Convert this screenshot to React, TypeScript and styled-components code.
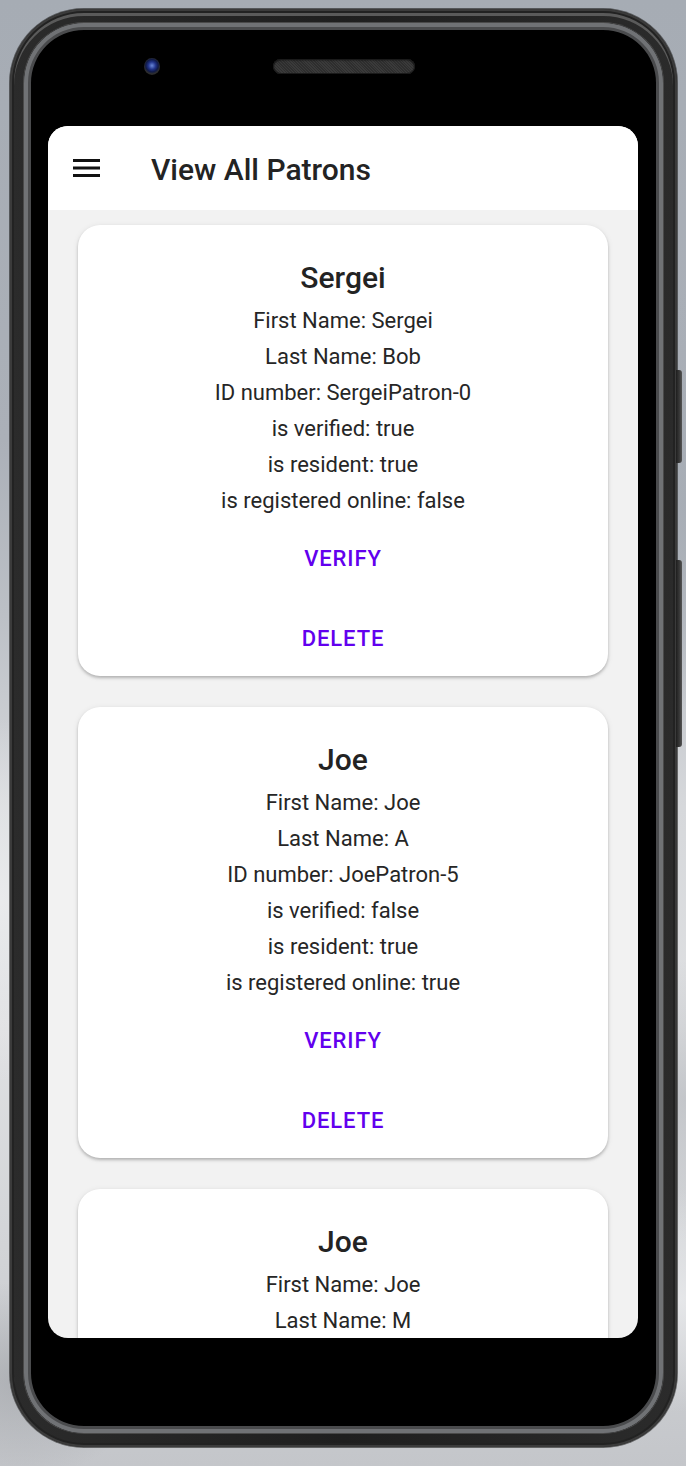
import React from "react";
import styled, { createGlobalStyle } from "styled-components";

const Global = createGlobalStyle`
  html, body { margin: 0; padding: 0; }
  body {
    width: 686px;
    height: 1466px;
    overflow: hidden;
    font-family: Roboto, "Noto Sans", Arial, sans-serif;
    background: #c9ccd0;
  }
`;

const Page = styled.div`
  width: 686px;
  height: 1466px;
  box-sizing: border-box;
  padding: 9px 9px 19px 10px;
  display: flex;
  background:
    radial-gradient(ellipse 180px 140px at 20px 1380px, rgba(150,153,158,0.55), transparent 70%),
    radial-gradient(ellipse 220px 160px at 680px 1300px, rgba(235,236,238,0.8), transparent 70%),
    radial-gradient(ellipse 140px 260px at 0px 900px, rgba(235,236,238,0.9), transparent 70%),
    radial-gradient(ellipse 160px 200px at 686px 1100px, rgba(180,183,188,0.6), transparent 70%),
    radial-gradient(ellipse 120px 300px at 686px 500px, rgba(166,172,180,0.9), transparent 70%),
    linear-gradient(180deg, #a6acb4 0%, #abb0b8 30%, #bcc0c6 42%, #d6d8db 55%, #dfe0e2 70%, #d2d4d7 85%, #c4c6ca 100%);
`;

const Phone = styled.div`
  position: relative;
  flex: 1;
  display: flex;
`;

const SideButton = styled.div<{ $top: number; $height: number }>`
  position: absolute;
  right: -5px;
  top: ${(p) => p.$top}px;
  width: 6px;
  height: ${(p) => p.$height}px;
  border-radius: 0 3px 3px 0;
  background: linear-gradient(90deg, #1e1e1e 0%, #3a3a3a 60%, #555 100%);
`;

const Body = styled.div`
  flex: 1;
  display: flex;
  box-sizing: border-box;
  padding: 14px;
  border-radius: 74px;
  background: linear-gradient(90deg, #2b2b2b 0%, #1f1f1f 50%, #2b2b2b 100%);
  box-shadow:
    inset 0 0 0 2px #3b3b3b,
    inset 0 0 0 4px #222,
    inset 0 3px 0 4px #5a5a5a,
    0 0 0 1px rgba(30,30,30,0.6);
`;

const Bezel = styled.div`
  flex: 1;
  display: flex;
  flex-direction: column;
  box-sizing: border-box;
  padding: 0 25px 0 24px;
  border-radius: 60px;
  background: #000;
  box-shadow:
    0 0 0 1px #4a4a4a,
    inset 0 0 0 4px #707275,
    inset 0 0 0 7px #4a4b4d,
    inset 0 0 0 9px #000;
`;

const TopBezel = styled.div`
  height: 103px;
  display: flex;
  align-items: flex-start;
  padding-left: 96px;
  gap: 113px;
`;

const Camera = styled.div`
  margin-top: 35px;
  width: 16px;
  height: 17px;
  border-radius: 50%;
  background: radial-gradient(circle at 50% 45%, #6a88d8 0%, #22348a 30%, #101a48 50%, #2e2e2e 66%, #1a1a1a 100%);
`;

const Speaker = styled.div`
  margin-top: 36px;
  width: 142px;
  height: 15px;
  border-radius: 8px;
  background: repeating-linear-gradient(45deg, #2e2e2e 0 1px, #3a3a3a 1px 2px);
  box-shadow: inset 0 0 0 1px #1a1a1a, inset 0 1px 2px rgba(0,0,0,0.8);
`;

const Screen = styled.div`
  width: 590px;
  height: 1212px;
  border-radius: 20px;
  overflow: hidden;
  background: #f2f2f2;
  display: flex;
  flex-direction: column;
`;

const AppBar = styled.div`
  height: 84px;
  flex: none;
  background: #fff;
  display: flex;
  align-items: center;
  padding-left: 25px;
  gap: 51px;
  box-sizing: border-box;
`;

const Title = styled.div`
  font-size: 30px;
  font-weight: 500;
  color: #232323;
  margin-top: 2px;
`;

const Content = styled.div`
  display: flex;
  flex-direction: column;
  gap: 31px;
  padding: 15px 30px;
`;

const Card = styled.div`
  flex: none;
  background: #fff;
  border-radius: 22px;
  box-shadow: 0 2px 3px rgba(0,0,0,0.22), 0 1px 6px rgba(0,0,0,0.08);
  display: flex;
  flex-direction: column;
  align-items: center;
  padding-top: 34px;
  height: 451px;
  box-sizing: border-box;
  overflow: hidden;
`;

const Name = styled.div`
  font-size: 30px;
  font-weight: 500;
  line-height: 38px;
  color: #232323;
  margin-bottom: 6px;
`;

const Line = styled.div`
  font-size: 22px;
  line-height: 36px;
  color: #262626;
`;

const Actions = styled.div`
  display: flex;
  flex-direction: column;
  align-items: center;
  gap: 2px;
`;

const ActionButton = styled.button`
  flex: none;
  height: 78px;
  border: none;
  background: transparent;
  font-family: Roboto, "Noto Sans", Arial, sans-serif;
  font-size: 22px;
  font-weight: 500;
  letter-spacing: 0.9px;
  color: #6200ee;
  padding: 0 16px;
  cursor: pointer;
`;

const Menu = () => (
  <svg width="27" height="18" viewBox="0 0 27 18">
    <rect x="0" y="0" width="27" height="3" fill="#111" />
    <rect x="0" y="7.5" width="27" height="3" fill="#111" />
    <rect x="0" y="15" width="27" height="3" fill="#111" />
  </svg>
);

type Patron = {
  first: string;
  last: string;
  id: string;
  verified: boolean;
  resident: boolean;
  online: boolean;
};

const patrons: Patron[] = [
  { first: "Sergei", last: "Bob", id: "SergeiPatron-0", verified: true, resident: true, online: false },
  { first: "Joe", last: "A", id: "JoePatron-5", verified: false, resident: true, online: true },
  { first: "Joe", last: "M", id: "JoePatron-6", verified: false, resident: true, online: true },
];

export default function App() {
  return (
    <>
      <Global />
      <Page>
        <Phone>
          <SideButton $top={361} $height={93} />
          <SideButton $top={551} $height={187} />
          <Body>
            <Bezel>
              <TopBezel>
                <Camera />
                <Speaker />
              </TopBezel>
              <Screen>
                <AppBar>
                  <Menu />
                  <Title>View All Patrons</Title>
                </AppBar>
                <Content>
                  {patrons.map((p, i) => (
                    <Card key={i}>
                      <Name>{p.first}</Name>
                      <Line>First Name: {p.first}</Line>
                      <Line>Last Name: {p.last}</Line>
                      <Line>ID number: {p.id}</Line>
                      <Line>is verified: {String(p.verified)}</Line>
                      <Line>is resident: {String(p.resident)}</Line>
                      <Line>is registered online: {String(p.online)}</Line>
                      <Actions>
                        <ActionButton>VERIFY</ActionButton>
                        <ActionButton>DELETE</ActionButton>
                      </Actions>
                    </Card>
                  ))}
                </Content>
              </Screen>
            </Bezel>
          </Body>
        </Phone>
      </Page>
    </>
  );
}
